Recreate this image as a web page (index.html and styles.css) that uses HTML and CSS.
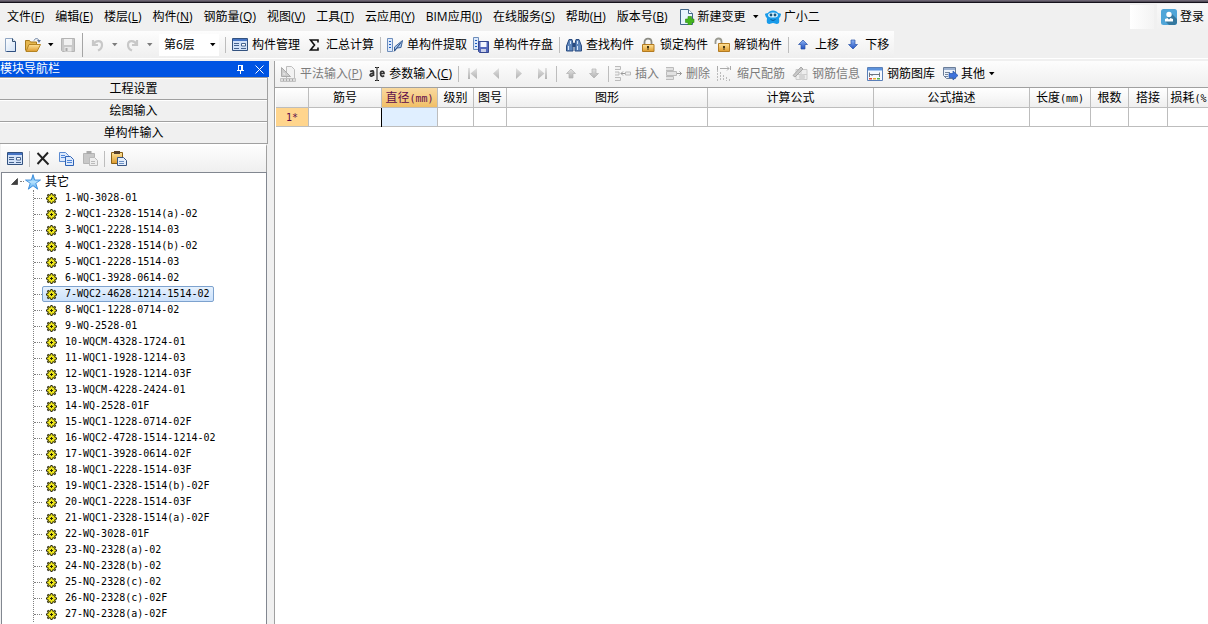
FILE: index.html
```html
<!DOCTYPE html>
<html lang="zh-CN">
<head>
<meta charset="utf-8">
<meta name="viewport" content="width=device-width, initial-scale=1">
<title>单构件输入</title>
<link rel="stylesheet" href="styles.css">
</head>
<body>
<svg class="sprite" aria-hidden="true">
  <defs>
    <linearGradient id="g-page" x1="0" y1="0" x2="1" y2="1"><stop offset="0" stop-color="#fff"/><stop offset="1" stop-color="#cfe0f5"/></linearGradient>
    <linearGradient id="g-gold" x1="0" y1="0" x2="0" y2="1"><stop offset="0" stop-color="#ffe39a"/><stop offset="1" stop-color="#dd9a2c"/></linearGradient>
    <linearGradient id="g-blue" x1="0" y1="0" x2="0" y2="1"><stop offset="0" stop-color="#8fb4f4"/><stop offset="1" stop-color="#1f50c0"/></linearGradient>
    <linearGradient id="g-gray" x1="0" y1="0" x2="0" y2="1"><stop offset="0" stop-color="#e2e2e2"/><stop offset="1" stop-color="#b2b2b2"/></linearGradient>
    <linearGradient id="g-star" x1="0" y1="0" x2="0" y2="1"><stop offset="0" stop-color="#2f8fe0"/><stop offset="0.5" stop-color="#b8e4ff"/><stop offset="1" stop-color="#4aa4ee"/></linearGradient>
  </defs>
  <symbol id="new" viewBox="0 0 16 16"><path d="M2.500 1.500h7l3 3v10h-10z" fill="url(#g-page)" stroke="#8fa5c2"/><path d="M9.500 1.500v3h3" fill="#dbe7f6" stroke="#35506f"/><path d="M12.500 5v9.500h-9" fill="none" stroke="#2f4f80"/></symbol>
  <symbol id="open" viewBox="0 0 16 16"><path d="M.5 13.500v-10h4l1 1.500h6v3" fill="#e5b64e" stroke="#a87a1c"/><path d="M1 14.500l3-7h11.500l-3.500 7z" fill="url(#g-gold)" stroke="#b58422"/><path d="M9 3.500c1-2.500 4-2.500 5 0" fill="none" stroke="#60789c"/><path d="M12 3h4l-2 3z" fill="#60789c"/></symbol>
  <symbol id="save" viewBox="0 0 16 16"><path d="M1.500 1.500h13v13h-12l-1-1z" fill="#c9c9c9" stroke="#b4b4b4"/><path d="M4 2h8v6H4z" fill="#f1f1f1"/><path d="M4.500 10h7v4.500h-7z" fill="#e8e8e8"/><path d="M5.500 11h2v3h-2z" fill="#aaa"/></symbol>
  <symbol id="undo" viewBox="0 0 16 16"><path d="M4 3v5h5M4.500 7.500c2-4.500 8.500-4.500 8.500.5 0 2.500-1.500 4.500-4 5.500" fill="none" stroke="#c8c8c8" stroke-width="2.200"/></symbol>
  <symbol id="redo" viewBox="0 0 16 16"><path d="M13 3v5H8M12.500 7.500C10.500 3 4 3 4 8c0 2.500 1.500 4.500 4 5.500" fill="none" stroke="#c8c8c8" stroke-width="2.200"/></symbol>
  <symbol id="caret" viewBox="0 0 7 4"><path d="M1 0h5.500L3.750 3.300z" fill="currentColor"/></symbol>
  <symbol id="form" viewBox="0 0 16 16"><path d="M.5 1.500h15v12H.5z" fill="#d3e2f8" stroke="#33527f"/><path d="M1 2h14v2H1z" fill="#4674c4"/><path d="M2 6.500h5M2 8.500h5M2 11.500h5M9 11.500h5" stroke="#45638f"/><path d="M9.500 6.500h4v2.500h-4z" fill="#fff" stroke="#45638f"/></symbol>
  <symbol id="sigma" viewBox="0 0 16 16"><path d="M12 5.500V3H4.500L8.500 8l-4 5H12v-2.500" fill="none" stroke="#111" stroke-width="1.600"/></symbol>
  <symbol id="extract" viewBox="0 0 16 16"><path d="M.5 1.500h5v13h-5z" fill="#dce9fb" stroke="#6d8dbb"/><path d="M2 4.500h2M2 7.500h2M2 10.500h2" stroke="#1f5ec0"/><path d="M7.500 14v-4l8-6.500-1.500 7-4 .5z" fill="#a9c7ee" stroke="#3d6297"/><path d="M7 14.500l7-9" stroke="#294d83"/></symbol>
  <symbol id="store" viewBox="0 0 16 16"><path d="M.5.500h5v12h-5z" fill="#dce9fb" stroke="#6d8dbb"/><path d="M2 3.500h2M2 6.500h2M2 9.500h2" stroke="#1f5ec0"/><path d="M5.500 4.500h10v11h-9l-1-1z" fill="#5468bd" stroke="#35488f"/><path d="M7.500 5h6v5h-6z" fill="#f3f6ff"/><path d="M8 12h5v3H8z" fill="#c9cfe8"/></symbol>
  <symbol id="find" viewBox="0 0 16 16"><path d="M3 2.500h3l1 4v7.500H.500V9zM13 2.500h-3L9 6.500V14h6.500V9z" fill="#5e86bb" stroke="#294b80"/><path d="M6.500 6h3v4h-3z" fill="#294b80"/><path d="M2.500 9v4M4.500 4v3M11.500 9v4M11.500 4v3" stroke="#d6e6fa"/></symbol>
  <symbol id="lock" viewBox="0 0 16 16"><path d="M4.500 8V5c0-4.500 7-4.500 7 0v3" fill="none" stroke="#8b8b83" stroke-width="1.800"/><path d="M2.500 7.500h11.500v7H2.500z" fill="url(#g-gold)" stroke="#b37b22"/><path d="M7 9h2v2H7zM7.500 11h1v2h-1z" fill="#463614"/></symbol>
  <symbol id="unlock" viewBox="0 0 16 16"><path d="M1.500 7V4.500c0-4 6-4 6 0V7" fill="none" stroke="#9a9a90" stroke-width="1.800"/><path d="M4.500 6.500h11v8h-11z" fill="url(#g-gold)" stroke="#b37b22"/><path d="M9 9h2v2H9zM9.500 11h1v2h-1z" fill="#463614"/></symbol>
  <symbol id="up" viewBox="0 0 16 16"><path d="M8 3l4.500 4.500H10V12H6V7.500H3.500z" fill="url(#g-blue)" stroke="#2d55a8" stroke-width=".7"/></symbol>
  <symbol id="down" viewBox="0 0 16 16"><path d="M8 12L3.500 7.500H6V3h4v4.500h2.500z" fill="url(#g-blue)" stroke="#2d55a8" stroke-width=".7"/></symbol>
  <symbol id="up-off" viewBox="0 0 16 16"><path d="M8 3l4.500 4.500H10V12H6V7.500H3.500z" fill="url(#g-gray)" stroke="#b2b2b2" stroke-width=".7"/></symbol>
  <symbol id="down-off" viewBox="0 0 16 16"><path d="M8 12L3.500 7.500H6V3h4v4.500h2.500z" fill="url(#g-gray)" stroke="#b2b2b2" stroke-width=".7"/></symbol>
  <symbol id="doc-add" viewBox="0 0 16 16"><path d="M1.500.500h8l4 4v11h-12z" fill="#e7f4fd" stroke="#42678a"/><path d="M9.500.500v4h4" fill="#fff" stroke="#42678a"/><path d="M9 7.500h3.500V10H15v3.500h-2.500V16H9v-2.500H6.500V10H9z" fill="#43b51d" stroke="#2c8a10" stroke-width=".6"/></symbol>
  <symbol id="mascot" viewBox="0 0 16 16"><path d="M3 4C4.500.500 11.500.500 13 4q3 0 3 1.500Q15.500 8 14 9q.500 3 0 5-2 1.500-4 .5-2-.8-4 0-2 1-4-.5-.500-2 0-5Q.500 8 0 5.500 0 4 3 4z" fill="#199bea"/><ellipse cx="8" cy="6" rx="5" ry="2.600" fill="#d9f2ff"/><circle cx="6" cy="6" r="1.400" fill="#1b577e"/><circle cx="10" cy="6" r="1.400" fill="#1b577e"/><path d="M5.500 10.500q2.500 2 5 0" fill="none" stroke="#0a5c9c"/></symbol>
  <symbol id="user" viewBox="0 0 16 16"><rect width="16" height="16" rx="2.500" fill="#4fa5d8"/><path d="M10 4l6 6v4l-2 2H8l-4-4z" fill="#35789f"/><circle cx="8" cy="5.500" r="2.700" fill="#fff"/><path d="M4 12.500V10l2.500-1L8 10.500 9.500 9l2.500 1v2.500z" fill="#fff"/></symbol>
  <symbol id="plan" viewBox="0 0 16 16"><path d="M6.500.500h5l3 3v9h-8z" fill="#f2f2f2" stroke="#bdbdbd"/><path d="M1.500 1.500l9 9h-9z" fill="#ccc" stroke="#aaa"/><path d="M3.500 6.500v2h2z" fill="#f6f6f6"/><path d="M.5 12.500h15v3H.5z" fill="#ddd" stroke="#c2c2c2"/><path d="M3.500 13v2M6.500 13v2M9.500 13v2M12.500 13v2" stroke="#aaa"/></symbol>
  <symbol id="ale" viewBox="0 0 16 16"><path d="M1 5.500q3.500-1.500 3.500.5v4M4.500 7.500C1 7 0 10 2.500 10.200L4.500 9M11.500 7.500h3.500C15 4.500 11.500 4.500 11.500 7.500s2.500 3.500 3.500 2" fill="none" stroke="#333" stroke-width="1.700"/><path d="M6 1.500h1.500L8 2l.5-.5H10M8 2v12M6 14.500h1.500L8 14l.5.500H10" fill="none" stroke="#111"/></symbol>
  <symbol id="first" viewBox="0 0 16 16"><path d="M3 2h2v11H3zM12 2v11L5.500 7.500z" fill="url(#g-gray)"/></symbol>
  <symbol id="prev" viewBox="0 0 16 16"><path d="M11 2v11L5 7.500z" fill="url(#g-gray)"/></symbol>
  <symbol id="next" viewBox="0 0 16 16"><path d="M5 2v11l6-5.500z" fill="url(#g-gray)"/></symbol>
  <symbol id="last" viewBox="0 0 16 16"><path d="M11 2h2v11h-2zM4 2v11l6.500-5.500z" fill="url(#g-gray)"/></symbol>
  <symbol id="insert" viewBox="0 0 16 16"><path d="M0 .5h5.500v3H0M0 11.500h5.500v3H0M0 6h4v3H0M10.500 6h5v3h-5z" fill="#f0f0f0" stroke="#bbb"/><path d="M10 7.500H6M8 5.500l-2 2 2 2" fill="none" stroke="#999"/></symbol>
  <symbol id="remove" viewBox="0 0 16 16"><path d="M0 1.500h7.500v3H0M0 10.500h7.500v3H0M.500 5.500h10v4H.500z" fill="#e2e2e2" stroke="#bbb"/><path d="M11 7.500h4.500M13.500 5.500l2 2-2 2" fill="none" stroke="#999"/></symbol>
  <symbol id="scale" viewBox="0 0 16 16"><path d="M.5 4v11M3.500 6v9M6.500 9v6M9.500 11v4M12.500 13v2" stroke="#bcbcbc" stroke-dasharray="2 1"/><path d="M3 2.500h9M10 .5l2 2-2 2M.500 0v4M13.500 0v4" fill="none" stroke="#aaa"/></symbol>
  <symbol id="info" viewBox="0 0 16 16"><path d="M4 3.500h11v10H4zM9 3v11M4 8.500h11" fill="#eee" stroke="#ccc"/><path d="M1 9.500L9 1l2 2-8 8z" fill="#c8c8c8" stroke="#a8a8a8"/><circle cx="10" cy="11" r="3" fill="#d5d5d5"/></symbol>
  <symbol id="library" viewBox="0 0 16 16"><path d="M.5 1.500h15v13H.5z" fill="#f5f9ff" stroke="#5b80b8"/><path d="M1 2h14v2.500H1z" fill="#5c92dc"/><path d="M2.500 11V6.500M2.500 8.500h10M12.500 11V6.500M5 8v2" fill="none" stroke="#6c7480"/><path d="M2 12h3v1.500H2z" fill="#e14a3a"/><path d="M6 12h3v1.500H6z" fill="#e8b12d"/><path d="M10 12h3v1.500h-3z" fill="#55b34a"/></symbol>
  <symbol id="other" viewBox="0 0 16 16"><path d="M1.500 1.500h12v11h-9l-3-3z" fill="#eef3fa" stroke="#6a7d99"/><path d="M2 2h11v2H2z" fill="#9cb1d0"/><path d="M3 6.500h5M3 8.500h3M3 10.500h3" stroke="#73849b"/><path d="M7 7.500h4V5l5 4.500-5 4.500v-2.500H7z" fill="#3e72db" stroke="#2453a8" stroke-width=".7"/></symbol>
  <symbol id="delete" viewBox="0 0 16 16"><path d="M1.500 2l11 11.500M12 1.500L1.500 13" stroke="#222" stroke-width="1.900"/></symbol>
  <symbol id="copy" viewBox="0 0 16 16"><path d="M.5 1.500h6l3 3v6h-9z" fill="#dce9fc" stroke="#5b8ad0"/><path d="M6.500 5.500h5l3 3v6h-8z" fill="#dce9fc" stroke="#2e62b5"/><path d="M2 4.500h4M2 6.500h4M8 9.500h5M8 11.500h5" stroke="#4f86d8"/></symbol>
  <symbol id="paste-off" viewBox="0 0 16 16"><path d="M1.500 2.500h11v10h-11z" fill="#c8c8c8" stroke="#b5b5b5"/><path d="M4.500 0h5v3h-5z" fill="#aaa"/><path d="M7.500 6.500h5l3 3v5h-8z" fill="#eee" stroke="#bbb"/><path d="M9 10.500h4M9 12.500h4" stroke="#bbb"/></symbol>
  <symbol id="paste" viewBox="0 0 16 16"><path d="M.5 1.500h11v11H.5z" fill="url(#g-gold)" stroke="#8a6116"/><path d="M3 0h6v3H3z" fill="#59432d"/><path d="M6.500 6.500h6l3 3v5h-9z" fill="#e4eefc" stroke="#3a5683"/><path d="M8 10.500h5M8 12.500h5" stroke="#6d91c4"/></symbol>
  <symbol id="pin" viewBox="0 0 9 9"><path d="M2.500 0v5.500M2 .5h4.500M5.500 0v5.500M6.500 0v5.500M1 5.500h7M4.500 5.500V9" fill="none" stroke="#fff"/></symbol>
  <symbol id="close" viewBox="0 0 9 9"><path d="M.5.500l8 8M8.500.500l-8 8" stroke="#fff"/></symbol>
  <symbol id="star" viewBox="0 0 16 16"><path d="M8 .6l1.700 5.400h5.800l-4.700 3.300 1.900 5.900L8 11.700l-4.700 3.500 1.900-5.900L.500 6h5.800z" fill="url(#g-star)" stroke="#2b82d6" stroke-width=".8"/></symbol>
  <symbol id="gear" viewBox="0 0 11 11"><path d="M5.500 0v11M0 5.500h11M1.500 1.500l8 8M9.500 1.500l-8 8" stroke="#26240a" stroke-width="2"/><circle cx="5.500" cy="5.500" r="4" fill="#e9e21c" stroke="#26240a"/><path d="M5.500 1v9M1 5.500h9M2.500 2.500l6 6M8.500 2.500l-6 6" stroke="#f6ef20" stroke-width=".8"/><path d="M4 5.500h3M5.500 4v3" stroke="#26240a"/></symbol>
  <symbol id="expander" viewBox="0 0 7 7"><path d="M6.500.500v6h-6z" fill="#404040" stroke="#222" stroke-width=".6"/></symbol>
</svg>

<header class="top">
  <div class="menu-row">
    <nav class="menubar" aria-label="主菜单">
      <button>文件(<u>F</u>)</button>
      <button>编辑(<u>E</u>)</button>
      <button>楼层(<u>L</u>)</button>
      <button>构件(<u>N</u>)</button>
      <button>钢筋量(<u>Q</u>)</button>
      <button>视图(<u>V</u>)</button>
      <button>工具(<u>T</u>)</button>
      <button>云应用(<u>Y</u>)</button>
      <button>BIM应用(<u>I</u>)</button>
      <button>在线服务(<u>S</u>)</button>
      <button>帮助(<u>H</u>)</button>
      <button>版本号(<u>B</u>)</button>
      <button><svg class="icon"><use href="#doc-add"/></svg>新建变更<svg class="caret"><use href="#caret"/></svg></button>
      <button class="assistant"><svg class="icon"><use href="#mascot"/></svg>广小二</button>
    </nav>
    <div class="account">
      <span class="blank"></span>
      <button class="login"><svg class="icon"><use href="#user"/></svg>登录</button>
    </div>
  </div>
  <div class="toolbar main-tools" role="toolbar" aria-label="常用工具">
    <button aria-label="新建"><svg class="icon"><use href="#new"/></svg></button>
    <button aria-label="打开"><svg class="icon"><use href="#open"/></svg></button>
    <button aria-label="打开选项"><svg class="caret"><use href="#caret"/></svg></button>
    <button aria-label="保存" disabled><svg class="icon"><use href="#save"/></svg></button>
    <span class="sep tall"></span>
    <button aria-label="撤销" disabled><svg class="icon"><use href="#undo"/></svg></button>
    <button aria-label="撤销选项" disabled><svg class="caret"><use href="#caret"/></svg></button>
    <button aria-label="恢复" disabled><svg class="icon"><use href="#redo"/></svg></button>
    <button aria-label="恢复选项" disabled><svg class="caret"><use href="#caret"/></svg></button>
    <span class="combo"><select aria-label="楼层"><option>第6层</option></select><svg class="caret"><use href="#caret"/></svg></span>
    <span class="sep"></span>
    <button><svg class="icon"><use href="#form"/></svg>构件管理</button>
    <button><svg class="icon"><use href="#sigma"/></svg>汇总计算</button>
    <span class="sep"></span>
    <button><svg class="icon"><use href="#extract"/></svg>单构件提取</button>
    <button><svg class="icon"><use href="#store"/></svg>单构件存盘</button>
    <span class="sep"></span>
    <button><svg class="icon"><use href="#find"/></svg>查找构件</button>
    <button><svg class="icon"><use href="#lock"/></svg>锁定构件</button>
    <button><svg class="icon"><use href="#unlock"/></svg>解锁构件</button>
    <span class="sep"></span>
    <button><svg class="icon"><use href="#up"/></svg>上移</button>
    <button><svg class="icon"><use href="#down"/></svg>下移</button>
  </div>
</header>

<div class="workspace">
  <aside class="navigator">
    <div class="title">
      <h2>模块导航栏</h2>
      <button aria-label="固定"><svg class="mark"><use href="#pin"/></svg></button>
      <button aria-label="关闭"><svg class="mark"><use href="#close"/></svg></button>
    </div>
    <div class="modules">
      <button>工程设置</button>
      <button>绘图输入</button>
      <button>单构件输入</button>
    </div>
    <div class="toolbar side-tools" role="toolbar" aria-label="构件工具">
      <button aria-label="构件管理"><svg class="icon"><use href="#form"/></svg></button>
      <span class="sep"></span>
      <button aria-label="删除"><svg class="icon"><use href="#delete"/></svg></button>
      <button aria-label="复制"><svg class="icon"><use href="#copy"/></svg></button>
      <button aria-label="粘贴" disabled><svg class="icon"><use href="#paste-off"/></svg></button>
      <span class="sep"></span>
      <button aria-label="粘贴构件"><svg class="icon"><use href="#paste"/></svg></button>
    </div>
    <div class="tree">
      <div class="root"><svg class="expander"><use href="#expander"/></svg><span class="stub"></span><svg class="icon"><use href="#star"/></svg>其它</div>
      <ul>
        <li><span class="node"><svg><use href="#gear"/></svg>1-WQ-3028-01</span></li>
        <li><span class="node"><svg><use href="#gear"/></svg>2-WQC1-2328-1514(a)-02</span></li>
        <li><span class="node"><svg><use href="#gear"/></svg>3-WQC1-2228-1514-03</span></li>
        <li><span class="node"><svg><use href="#gear"/></svg>4-WQC1-2328-1514(b)-02</span></li>
        <li><span class="node"><svg><use href="#gear"/></svg>5-WQC1-2228-1514-03</span></li>
        <li><span class="node"><svg><use href="#gear"/></svg>6-WQC1-3928-0614-02</span></li>
        <li><span class="node selected"><svg><use href="#gear"/></svg>7-WQC2-4628-1214-1514-02</span></li>
        <li><span class="node"><svg><use href="#gear"/></svg>8-WQC1-1228-0714-02</span></li>
        <li><span class="node"><svg><use href="#gear"/></svg>9-WQ-2528-01</span></li>
        <li><span class="node"><svg><use href="#gear"/></svg>10-WQCM-4328-1724-01</span></li>
        <li><span class="node"><svg><use href="#gear"/></svg>11-WQC1-1928-1214-03</span></li>
        <li><span class="node"><svg><use href="#gear"/></svg>12-WQC1-1928-1214-03F</span></li>
        <li><span class="node"><svg><use href="#gear"/></svg>13-WQCM-4228-2424-01</span></li>
        <li><span class="node"><svg><use href="#gear"/></svg>14-WQ-2528-01F</span></li>
        <li><span class="node"><svg><use href="#gear"/></svg>15-WQC1-1228-0714-02F</span></li>
        <li><span class="node"><svg><use href="#gear"/></svg>16-WQC2-4728-1514-1214-02</span></li>
        <li><span class="node"><svg><use href="#gear"/></svg>17-WQC1-3928-0614-02F</span></li>
        <li><span class="node"><svg><use href="#gear"/></svg>18-WQC1-2228-1514-03F</span></li>
        <li><span class="node"><svg><use href="#gear"/></svg>19-WQC1-2328-1514(b)-02F</span></li>
        <li><span class="node"><svg><use href="#gear"/></svg>20-WQC1-2228-1514-03F</span></li>
        <li><span class="node"><svg><use href="#gear"/></svg>21-WQC1-2328-1514(a)-02F</span></li>
        <li><span class="node"><svg><use href="#gear"/></svg>22-WQ-3028-01F</span></li>
        <li><span class="node"><svg><use href="#gear"/></svg>23-NQ-2328(a)-02</span></li>
        <li><span class="node"><svg><use href="#gear"/></svg>24-NQ-2328(b)-02</span></li>
        <li><span class="node"><svg><use href="#gear"/></svg>25-NQ-2328(c)-02</span></li>
        <li><span class="node"><svg><use href="#gear"/></svg>26-NQ-2328(c)-02F</span></li>
        <li><span class="node"><svg><use href="#gear"/></svg>27-NQ-2328(a)-02F</span></li>
      </ul>
    </div>
  </aside>

  <main class="editor">
    <div class="toolbar edit-tools" role="toolbar" aria-label="钢筋编辑">
      <button disabled><svg class="icon"><use href="#plan"/></svg><span>平法输入(<u>P</u>)</span></button>
      <button><svg class="icon"><use href="#ale"/></svg><span>参数输入(<u>C</u>)</span></button>
      <span class="sep"></span>
      <button aria-label="首行" disabled><svg class="icon"><use href="#first"/></svg></button>
      <button aria-label="上一行" disabled><svg class="icon"><use href="#prev"/></svg></button>
      <button aria-label="下一行" disabled><svg class="icon"><use href="#next"/></svg></button>
      <button aria-label="末行" disabled><svg class="icon"><use href="#last"/></svg></button>
      <span class="sep"></span>
      <button aria-label="上移" disabled><svg class="icon"><use href="#up-off"/></svg></button>
      <button aria-label="下移" disabled><svg class="icon"><use href="#down-off"/></svg></button>
      <span class="sep"></span>
      <button disabled><svg class="icon"><use href="#insert"/></svg>插入</button>
      <button disabled><svg class="icon"><use href="#remove"/></svg>删除</button>
      <button disabled><svg class="icon"><use href="#scale"/></svg>缩尺配筋</button>
      <button disabled><svg class="icon"><use href="#info"/></svg>钢筋信息</button>
      <button><svg class="icon"><use href="#library"/></svg>钢筋图库</button>
      <button class="more"><svg class="icon"><use href="#other"/></svg>其他<svg class="caret"><use href="#caret"/></svg></button>
    </div>
    <div class="sheet">
      <table>
        <colgroup>
          <col class="c-row"><col class="c-name"><col class="c-dia"><col class="c-grade"><col class="c-no"><col class="c-shape"><col class="c-calc"><col class="c-desc"><col class="c-len"><col class="c-count"><col class="c-lap"><col class="c-loss">
        </colgroup>
        <thead>
          <tr><th></th><th>筋号</th><th class="current">直径<span class="unit">(mm)</span></th><th>级别</th><th>图号</th><th>图形</th><th>计算公式</th><th>公式描述</th><th>长度<span class="unit">(mm)</span></th><th>根数</th><th>搭接</th><th>损耗<span class="unit">(%)</span></th></tr>
        </thead>
        <tbody>
          <tr><th class="row-head"><span class="unit">1*</span></th><td></td><td class="active"></td><td></td><td></td><td></td><td></td><td></td><td></td><td></td><td></td><td></td></tr>
        </tbody>
      </table>
    </div>
  </main>
</div>
</body>
</html>
```

FILE: styles.css
```css
* {
  box-sizing: border-box;
}

body {
  margin: 0;
  height: 100vh;
  display: flex;
  flex-direction: column;
  overflow: hidden;
  background: #f0f0f0;
  color: #000;
  font: 12px/16px "Open Sans", "Noto Sans CJK SC", sans-serif;
}

button,
select {
  margin: 0;
  padding: 0;
  border: 0;
  background: none;
  color: inherit;
  font: inherit;
}

button {
  display: inline-flex;
  align-items: center;
  flex: none;
  white-space: nowrap;
}

button:disabled {
  color: #7c7c7c;
}

u {
  text-underline-offset: 1px;
}

.sprite {
  position: absolute;
  width: 0;
  height: 0;
}

.icon {
  width: 16px;
  height: 16px;
  flex: none;
}

.caret {
  width: 7px;
  height: 4px;
  flex: none;
}

/* Menu and main toolbar */
.top {
  flex: none;
  border-bottom: 1px solid #fff;
}

.top::before {
  content: "";
  display: block;
  height: 3px;
  background: linear-gradient(#4a4352, #8d8592 1px, #15121c 2px);
}

.menu-row {
  display: flex;
  justify-content: space-between;
  height: 28px;
}

.menubar {
  display: flex;
  align-items: center;
  gap: 11px;
  padding-left: 7px;
}

.menubar button:not(:has(svg)) {
  display: block;
}

.menubar .icon {
  margin-right: 3px;
}

.menubar .caret {
  margin-left: 6px;
}

.menubar .assistant {
  margin-left: -5px;
}

.account {
  display: flex;
  align-items: center;
  gap: 3px;
}

.blank {
  width: 24px;
  height: 24px;
  background: linear-gradient(90deg, #fff, #f3f3f3);
}

.login {
  height: 26px;
  gap: 3px;
  padding: 0 4px;
  background: linear-gradient(#f8f8f8, #f0f0f0);
}

.toolbar {
  display: flex;
  align-items: center;
  background: linear-gradient(#fdfdfd, #efefef);
}

.toolbar button {
  gap: 4px;
}

.sep {
  width: 1px;
  height: 16px;
  flex: none;
  background: #bdbdbd;
}

.sep.tall {
  height: 24px;
  background: #a5a5a5;
}

.main-tools {
  width: max-content;
  height: 27px;
  gap: 6px;
  padding: 0 5px 0 3px;
}

.combo {
  display: grid;
  grid-template-columns: 1fr 10px;
  align-items: center;
  width: 60px;
  height: 22px;
  background: #fff;
}

.combo select {
  grid-area: 1 / 1 / 2 / 3;
  height: 22px;
  padding: 0 12px 0 5px;
  appearance: none;
}

.combo .caret {
  grid-area: 1 / 2;
  pointer-events: none;
}

/* Navigator */
.workspace {
  display: flex;
  flex: 1;
  gap: 5px;
  min-height: 0;
  padding-top: 2px;
}

.navigator {
  display: flex;
  flex-direction: column;
  flex: none;
  width: 269px;
}

.title {
  display: flex;
  align-items: center;
  flex: none;
  gap: 10px;
  height: 16px;
  padding-right: 5px;
  background: #0054e3;
  color: #fff;
}

.title h2 {
  flex: 1;
  margin: 0;
  font-size: 12px;
  line-height: 16px;
  font-weight: 400;
}

.mark {
  width: 9px;
  height: 9px;
}

.modules {
  display: flex;
  flex-direction: column;
  flex: none;
  margin-right: 1px;
  border-right: 1px solid #a0a0a0;
  border-top: 1px solid #a0a0a0;
}

.modules button {
  justify-content: center;
  height: 22px;
  border-top: 1px solid #fff;
  border-bottom: 1px solid #a0a0a0;
}

.side-tools {
  flex: none;
  height: 28px;
  gap: 7px;
  margin: 0 2px 0 1px;
  padding-left: 6px;
  border-top: 2px solid #fff;
  border-right: 1px solid #a0a0a0;
}

.tree {
  flex: 1;
  min-height: 0;
  margin: 0 2px 0 1px;
  border: 1px solid #828790;
  border-bottom: 0;
  background: #fff;
  overflow: hidden;
}

.root {
  display: flex;
  align-items: center;
  height: 17px;
  padding-left: 9px;
}

.root .icon {
  margin-right: 4px;
}

.expander {
  width: 7px;
  height: 7px;
}

.stub {
  width: 4px;
  margin: 0 1px 0 2px;
  border-top: 1px dotted #808080;
}

.tree ul {
  margin: 0 0 0 31px;
  padding: 0;
  border-left: 1px dotted #808080;
  list-style: none;
}

.tree li {
  display: flex;
  align-items: center;
  height: 16px;
}

.tree li::before {
  content: "";
  width: 8px;
  border-top: 1px dotted #808080;
}

.node {
  display: flex;
  align-items: center;
  gap: 8px;
  height: 16px;
  padding: 0 3px;
  border: 1px solid transparent;
  border-radius: 2px;
  font: 10px/14px "DejaVu Sans Mono", monospace;
  white-space: nowrap;
}

.node svg {
  width: 11px;
  height: 11px;
}

.selected {
  border-color: #7da2ce;
  background: linear-gradient(#e6f1fd, #cbe1fb);
}

/* Editor */
.editor {
  display: flex;
  flex-direction: column;
  flex: 1;
  min-width: 0;
  border-left: 1px solid #a0a0a0;
}

.edit-tools {
  flex: none;
  height: 27px;
  gap: 7px;
  padding-left: 5px;
  border-bottom: 1px solid #a0a0a0;
  overflow: hidden;
}

.edit-tools .sep,
.side-tools .sep {
  margin: 0 -1px;
}

.toolbar .more {
  gap: 3px;
}

.sheet {
  flex: 1;
  min-height: 0;
  padding-left: 1px;
  background: #fff;
  overflow: hidden;
}

table {
  width: 940px;
  table-layout: fixed;
  border-collapse: separate;
  border-spacing: 0;
}

th,
td {
  height: 19px;
  padding: 0;
  border-right: 1px solid #bdbdbd;
  border-bottom: 1px solid #bdbdbd;
  font-weight: 400;
  line-height: 16px;
  text-align: center;
  white-space: nowrap;
}

thead th {
  height: 20px;
  padding-top: 1px;
  background: linear-gradient(#fff, #efefef);
}

.unit {
  font: 10px/16px "DejaVu Sans Mono", monospace;
}

.current {
  background: linear-gradient(#f9d99f, #f1bf67);
  color: #5e0b4b;
}

.row-head {
  background: #ffd58d;
  color: #5e0b4b;
}

.active {
  background: #e0efff;
  box-shadow: -1px 0 #000;
}

.c-row { width: 33px; }
.c-name { width: 73px; }
.c-dia { width: 56px; }
.c-grade { width: 36px; }
.c-no { width: 33px; }
.c-shape { width: 201px; }
.c-calc { width: 166px; }
.c-desc { width: 156px; }
.c-len { width: 61px; }
.c-count { width: 38px; }
.c-lap { width: 39px; }
.c-loss { width: 48px; }
```
